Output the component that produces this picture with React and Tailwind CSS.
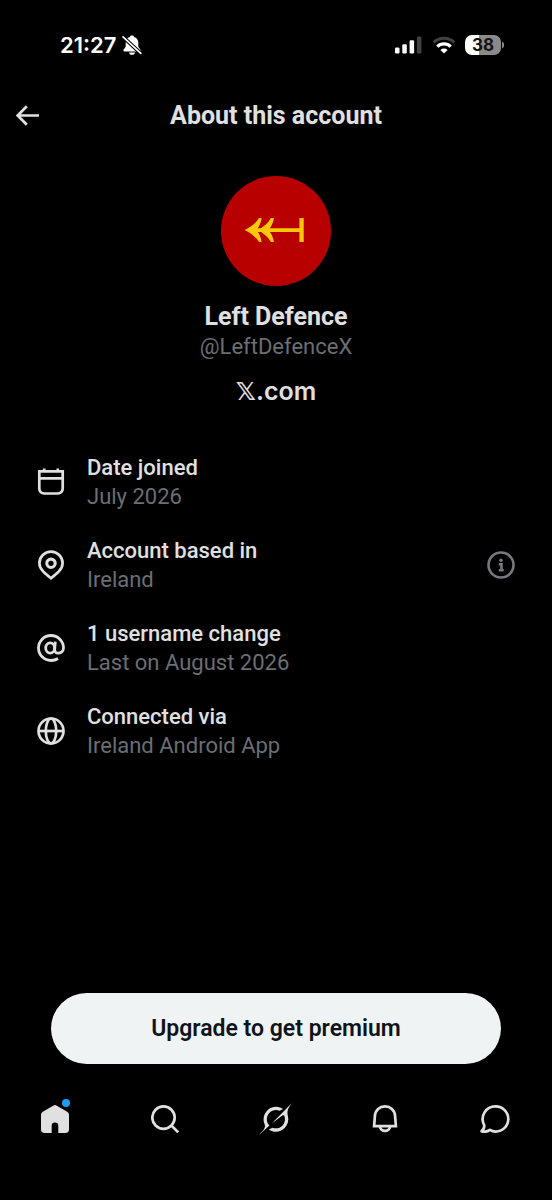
function BellOffIcon() {
  return (
    <svg viewBox="0 0 20 20" className="h-5 w-5" fill="currentColor" aria-hidden="true">
      <path d="M10 0.500c1 0 1.800.5 2.100 1.400 2.700.8 4.200 3 4.200 5.700v3.200c0 1.300.6 2 1.500 2.900.5.5.8.9.8 1.500 0 .8-.5 1.300-1.300 1.300H2.700c-.8 0-1.300-.5-1.300-1.300 0-.6.3-1 .8-1.500.9-.9 1.500-1.600 1.500-2.900V7.600c0-2.700 1.500-4.900 4.200-5.700C8.200 1 9 .5 10 .5z" />
      <path d="M7 17.400h6c-.2 1.400-1.400 2.300-3 2.300s-2.800-.9-3-2.300z" />
      <path d="M0.400 1.400 19 18.600" stroke="#000" strokeWidth="3.800" />
      <path d="M1 1.800 18.800 18.300" stroke="currentColor" strokeWidth="1.700" strokeLinecap="round" />
    </svg>
  );
}

function SignalIcon() {
  return (
    <svg viewBox="0 0 28 18" className="h-[18px] w-7" aria-hidden="true">
      <rect x="0" y="11.500" width="4.500" height="6" rx="1.200" fill="#fff" />
      <rect x="7.300" y="8.200" width="4.500" height="9.300" rx="1.200" fill="#fff" />
      <rect x="14.600" y="4.200" width="4.500" height="13.300" rx="1.200" fill="#fff" />
      <rect x="21.900" y="0.500" width="4.500" height="17" rx="1.200" fill="#414141" />
    </svg>
  );
}

function WifiIcon() {
  return (
    <svg viewBox="0 0 24 18" className="h-[18px] w-6" fill="none" strokeWidth="3.200" aria-hidden="true">
      <path d="M1.700 6.400a14.800 14.800 0 0 1 20.600 0" stroke="#414141" />
      <path d="M5.300 10.600a9.500 9.500 0 0 1 13.400 0" stroke="#fff" />
      <path d="M12 17.600 8.400 14a5.200 5.200 0 0 1 7.200 0z" fill="#fff" />
    </svg>
  );
}

function StatusBar() {
  return (
    <div className="flex h-[90px] items-center justify-between pr-12 pl-[60px] text-white">
      <div className="flex items-center gap-1.5">
        <time className="font-[Inter,sans-serif] text-[22px] leading-7 font-semibold">21:27</time>
        <BellOffIcon />
      </div>
      <div className="flex items-center gap-[9px]">
        <SignalIcon />
        <WifiIcon />
        <div className="flex items-center gap-px">
          <div className="flex h-5 w-9 items-center justify-center rounded-[7px] bg-linear-to-r from-white from-38% to-[#8a8a8a] to-38% font-[Inter,sans-serif] text-[17px] leading-5 font-bold text-[#151515]">
            38
          </div>
          <div className="h-1.5 w-0.5 rounded-r-full bg-[#8a8a8a]" />
        </div>
      </div>
    </div>
  );
}

function Header() {
  return (
    <header className="grid h-[52px] grid-cols-[1fr_auto_1fr] items-center px-4">
      <button type="button" aria-label="Back" className="justify-self-start">
        <svg viewBox="0 0 24 24" className="h-6 w-6" fill="none" stroke="currentColor" strokeWidth="2.700" aria-hidden="true">
          <path d="M1.800 11.500H23M10.800 2.300 1.600 11.500l9.200 9.200" />
        </svg>
      </button>
      <h1 className="text-[25px] leading-8 font-bold">About this account</h1>
    </header>
  );
}

function Profile() {
  return (
    <section className="mt-[34px] flex flex-col items-center">
      <svg viewBox="0 0 110 110" className="h-[110px] w-[110px]" role="img" aria-label="Left Defence avatar">
        <circle cx="55" cy="55" r="55" fill="#b80000" />
        <g fill="#fdc70c">
          <path d="M28 52.200h52v3.900H28z" />
          <path d="M78.400 42h4.300v24h-4.300z" />
          <path d="M23.500 54.100C30.500 50.600 35.500 46.500 38 42h2.600c-.6 4.900-2.600 8.900-5.200 12.100 2.600 3.200 4.600 7 5.200 11.900H38C35.500 61.700 30.500 57.600 23.500 54.100z" />
          <path d="M37 54.100C43 50.600 47.500 46.500 50 42h2.900c-.6 4.900-2.800 8.900-5.500 12.100 2.700 3.200 4.900 7 5.500 11.900H50C47.500 61.700 43 57.600 37 54.100z" />
        </g>
      </svg>
      <h2 className="mt-4 text-[25px] leading-[30px] font-bold">Left Defence</h2>
      <p className="text-[22px] leading-[30px] text-[#6b6e72]">@LeftDefenceX</p>
      <p className="mt-[13px] font-[Inter,'DejaVu_Sans',sans-serif] text-[25px] leading-8 font-semibold">𝕏.com</p>
    </section>
  );
}

function CalendarIcon() {
  return (
    <svg viewBox="0 0 28 28" className="h-7 w-7" fill="none" stroke="currentColor" strokeWidth="2.700" aria-hidden="true">
      <path d="M2.300 3.400h23.400v17.300a4.800 4.800 0 0 1-4.800 4.800H7.100a4.800 4.800 0 0 1-4.800-4.800zM2.300 10.400h23.400M7.200.5v3M20.800.5v3" />
    </svg>
  );
}

function PinIcon() {
  return (
    <svg viewBox="0 0 28 30" className="h-[30px] w-7" fill="none" stroke="currentColor" strokeWidth="2.700" aria-hidden="true">
      <path d="M14 28.200C8.500 24 2.400 19.300 2.400 13.200a11.600 11.600 0 0 1 23.200 0c0 6.100-6.100 10.800-11.600 15z" />
      <circle cx="14" cy="13.300" r="4.200" strokeWidth="3.100" />
    </svg>
  );
}

function AtIcon() {
  return (
    <svg viewBox="0 0 28 28" className="h-7 w-7" fill="none" stroke="currentColor" strokeWidth="2.800" aria-hidden="true">
      <ellipse cx="13.200" cy="14" rx="4.500" ry="5.200" />
      <path d="M18.300 7.600 17.700 15c-.2 2.900 1.200 4.200 3.300 4.200 2.600 0 5.500-1.800 5.500-5.200A12.500 12.500 0 1 0 14 26.500c2.600 0 4.900-.6 7-2" />
    </svg>
  );
}

function GlobeIcon() {
  return (
    <svg viewBox="0 0 28 28" className="h-7 w-7" fill="none" stroke="currentColor" strokeWidth="2.700" aria-hidden="true">
      <circle cx="14" cy="14" r="12.500" />
      <ellipse cx="14" cy="14" rx="5.200" ry="12.500" />
      <path d="M1.500 14h25" />
    </svg>
  );
}

function InfoIcon() {
  return (
    <svg viewBox="0 0 28 28" className="h-7 w-7" aria-hidden="true">
      <circle cx="14" cy="14" r="12.500" fill="none" stroke="currentColor" strokeWidth="2.600" />
      <circle cx="14" cy="9.300" r="1.800" fill="currentColor" />
      <path d="M11.800 13.200h2.700v6.200M11.800 19.200h4.900" fill="none" stroke="currentColor" strokeWidth="2.600" />
    </svg>
  );
}

const details = [
  { icon: CalendarIcon, label: "Date joined", value: "July 2026" },
  { icon: PinIcon, label: "Account based in", value: "Ireland", info: true },
  { icon: AtIcon, label: "1 username change", value: "Last on August 2026" },
  { icon: GlobeIcon, label: "Connected via", value: "Ireland Android App" },
];

function Details() {
  return (
    <ul className="mt-[46px] flex flex-col gap-[25px] px-[37px]">
      {details.map(({ icon: Icon, label, value, info }) => (
        <li key={label} className="flex items-center gap-[22px]">
          <Icon />
          <div className="flex-1 text-[22px] leading-[29px]">
            <p className="font-medium">{label}</p>
            <p className="text-[#6b6e72]">{value}</p>
          </div>
          {info && (
            <button type="button" aria-label="More information" className="text-[#77797c]">
              <InfoIcon />
            </button>
          )}
        </li>
      ))}
    </ul>
  );
}

function HomeIcon() {
  return (
    <svg viewBox="0 0 28 28" className="h-7 w-7" fill="currentColor" aria-hidden="true">
      <path d="M12.600.5a2.800 2.800 0 0 1 2.800 0l10.800 6.200A3.600 3.600 0 0 1 28 9.800v14.400a3.800 3.800 0 0 1-3.800 3.800h-6.900v-7.300a3.300 3.300 0 0 0-6.600 0V28H3.800A3.800 3.800 0 0 1 0 24.200V9.800a3.600 3.600 0 0 1 1.800-3.100z" />
    </svg>
  );
}

function SearchIcon() {
  return (
    <svg viewBox="0 0 28 28" className="h-7 w-7" fill="none" stroke="currentColor" strokeWidth="2.700" aria-hidden="true">
      <circle cx="12.500" cy="12.600" r="11.200" />
      <path d="m20.500 20.600 6.700 6.700" />
    </svg>
  );
}

function SlashRingIcon() {
  return (
    <svg viewBox="0 0 33 32" className="h-8 w-[33px]" fill="currentColor" aria-hidden="true">
      <path d="M12.745 20.540l10.970-8.190c.539-.4 1.307-.244 1.564.38 1.349 3.288.746 7.241-1.938 9.955-2.683 2.714-6.417 3.310-9.830 1.954l-3.728 1.745c5.347 3.697 11.840 2.782 15.898-1.324 3.219-3.255 4.216-7.692 3.284-11.693l.008.009c-1.351-5.878.332-8.227 3.782-13.031L33 0l-4.540 4.590v-.014L12.743 20.544m-2.263 1.987c-3.837-3.707-3.175-9.446.1-12.755 2.420-2.449 6.388-3.448 9.852-1.979l3.720-1.737c-.67-.49-1.530-1.017-2.515-1.387-4.455-1.854-9.789-.931-13.410 2.728-3.483 3.523-4.579 8.940-2.697 13.561 1.405 3.454-.899 5.898-3.220 8.364C1.490 30.200.666 31.074 0 32l10.478-9.466" />
    </svg>
  );
}

function BellIcon() {
  return (
    <svg viewBox="0 0 28 28" className="h-7 w-7" fill="none" stroke="currentColor" strokeWidth="2.700" aria-hidden="true">
      <path d="M3.900 11C4.300 5.200 8.600 1.400 14 1.400s9.700 3.800 10.100 9.600L24.900 21.200H3.100z" />
      <path d="M8.900 21.500a5.150 5.150 0 0 0 10.200 0" />
    </svg>
  );
}

function ChatIcon() {
  return (
    <svg viewBox="0 0 30 28" className="h-7 w-[30px]" fill="none" stroke="currentColor" strokeWidth="2.700" strokeLinejoin="round" aria-hidden="true">
      <path d="M15.600 1.400A12.700 12.600 0 1 1 15.600 26.600c-2 0-3.900-.5-5.700-1.700-2.500 1.900-5.400 2.200-8.300 1.200 2-1.500 3-3.500 2.500-6.300A12.700 12.600 0 0 1 15.600 1.400z" />
    </svg>
  );
}

const tabs = [
  { icon: HomeIcon, label: "Home", badge: true },
  { icon: SearchIcon, label: "Search" },
  { icon: SlashRingIcon, label: "Grok" },
  { icon: BellIcon, label: "Notifications" },
  { icon: ChatIcon, label: "Messages" },
];

function TabBar() {
  return (
    <nav className="mt-[37px] grid grid-cols-5 pr-0.5 pb-[63px]">
      {tabs.map(({ icon: Icon, label, badge }) => (
        <a key={label} href="#" aria-label={label} className="flex h-9 items-center justify-center">
          <span className="relative">
            <Icon />
            {badge && <span className="absolute -top-1.5 -right-px h-2 w-2 rounded-full bg-[#1d9bf0]" />}
          </span>
        </a>
      ))}
    </nav>
  );
}

export default function App() {
  return (
    <div className="flex min-h-screen flex-col bg-black font-[Roboto,sans-serif] text-[#e0e0e0]">
      <StatusBar />
      <Header />
      <main>
        <Profile />
        <Details />
      </main>
      <footer className="mt-auto">
        <div className="px-[51px]">
          <button type="button" className="h-[71px] w-full rounded-full bg-[#eff3f4] pt-0.5 text-[23px] font-semibold text-[#0f1419]">
            Upgrade to get premium
          </button>
        </div>
        <TabBar />
      </footer>
    </div>
  );
}
